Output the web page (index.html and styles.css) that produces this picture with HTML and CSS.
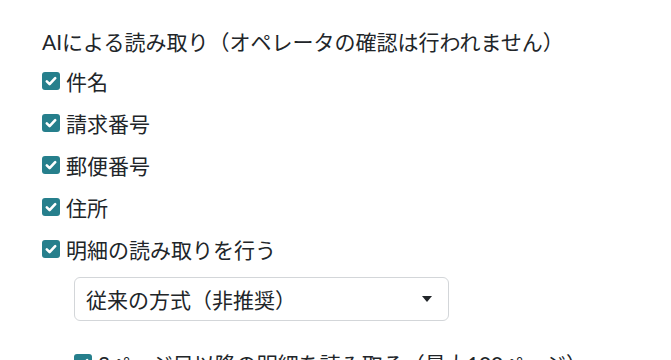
FILE: index.html
```html
<!DOCTYPE html>
<html lang="ja">

<head>
    <meta charset="UTF-8">
    <meta name="viewport" content="width=device-width, initial-scale=1.0">
    <title>読み取り設定</title>
    <link rel="stylesheet" href="styles.css">
</head>

<body>
    <div class="settings">
        <p class="settings-title">AIによる読み取り（オペレータの確認は行われません）</p>

        <label class="check-row">
            <span class="check-box"><svg viewBox="0 0 16 16"><path d="M3.8 8.4l2.8 2.8 5.6-6" /></svg></span>
            <span>件名</span>
        </label>
        <label class="check-row">
            <span class="check-box"><svg viewBox="0 0 16 16"><path d="M3.8 8.4l2.8 2.8 5.6-6" /></svg></span>
            <span>請求番号</span>
        </label>
        <label class="check-row">
            <span class="check-box"><svg viewBox="0 0 16 16"><path d="M3.8 8.4l2.8 2.8 5.6-6" /></svg></span>
            <span>郵便番号</span>
        </label>
        <label class="check-row">
            <span class="check-box"><svg viewBox="0 0 16 16"><path d="M3.8 8.4l2.8 2.8 5.6-6" /></svg></span>
            <span>住所</span>
        </label>
        <label class="check-row">
            <span class="check-box"><svg viewBox="0 0 16 16"><path d="M3.8 8.4l2.8 2.8 5.6-6" /></svg></span>
            <span>明細の読み取りを行う</span>
        </label>

        <!-- 明細の読み取り方式 -->
        <div class="detail-options">
            <div class="select-box">
                <span>従来の方式（非推奨）</span>
                <span class="select-arrow"></span>
            </div>
            <label class="check-row extra-row">
                <span class="check-box"><svg viewBox="0 0 16 16"><path d="M3.8 8.4l2.8 2.8 5.6-6" /></svg></span>
                <span>2ページ目以降の明細を読み取る（最大100ページ）</span>
            </label>
        </div>
    </div>
</body>

</html>
```

FILE: styles.css
```css
body {
    margin: 0;
    padding: 0;
    background: white;
    font-family: Lato, "Noto Sans CJK JP", sans-serif;
    font-size: 21px;
    color: #212529;
}

.settings {
    padding: 27px 0 0 42px;
}

.settings-title {
    margin: 0 0 3px 0;
    line-height: 30px;
}

.check-row {
    display: flex;
    align-items: center;
    gap: 6px;
    height: 42px;
    cursor: pointer;
}

.check-box {
    width: 18px;
    height: 18px;
    border-radius: 3px;
    background-color: #267f8c;
    display: flex;
    align-items: center;
    justify-content: center;
    flex-shrink: 0;
}

.check-box svg {
    width: 16px;
    height: 16px;
    fill: none;
    stroke: white;
    stroke-width: 2.6;
    stroke-linecap: round;
    stroke-linejoin: round;
}

.detail-options {
    margin-left: 32px;
    padding-top: 7px;
}

.select-box {
    width: 375px;
    height: 44px;
    box-sizing: border-box;
    border: 1px solid #d3d6d9;
    border-radius: 6px;
    padding: 0 16px 0 11px;
    display: flex;
    align-items: center;
    justify-content: space-between;
}

.select-arrow {
    width: 0;
    height: 0;
    border-left: 5px solid transparent;
    border-right: 5px solid transparent;
    border-top: 6px solid #212529;
}

.extra-row {
    margin-top: 21px;
}
```
